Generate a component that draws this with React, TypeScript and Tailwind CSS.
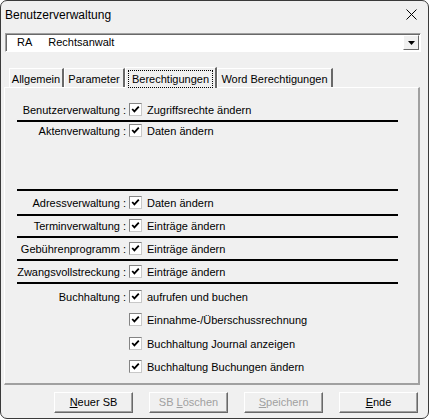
import React from 'react'

const FONT = { fontFamily: '"Liberation Sans", Arial, sans-serif' }

function Check() {
  return (
    <span className="flex h-[13px] w-[13px] shrink-0 items-center justify-center border border-t-[#848484] border-l-[#848484] border-r-[#c8c8c8] border-b-[#c8c8c8] bg-white">
      <svg width="9" height="9" viewBox="0 0 9 9">
        <polyline points="1.2,4 3.4,6.4 7.8,1.6" fill="none" stroke="#000" strokeWidth="1.8" />
      </svg>
    </span>
  )
}

function PermRow({ label, text, className }: { label: string; text: string; className: string }) {
  return (
    <div className={`flex h-[16px] items-center ${className}`}>
      <span className="mt-[2px] w-[121px] shrink-0 whitespace-nowrap text-right">{label}</span>
      <span className="ml-[3px]">
        <Check />
      </span>
      <span className="ml-[5px] mt-[2px] whitespace-nowrap">{text}</span>
    </div>
  )
}

function SubRow({ text, className }: { text: string; className: string }) {
  return (
    <div className={`flex h-[16px] items-center pl-[124px] ${className}`}>
      <Check />
      <span className="ml-[5px] mt-[2px] whitespace-nowrap">{text}</span>
    </div>
  )
}

function Line({ className }: { className: string }) {
  return <div className={`ml-[12px] h-[2px] w-[381px] bg-black ${className}`} />
}

function Button({ children, disabled }: { children: React.ReactNode; disabled?: boolean }) {
  return (
    <div
      className={`flex h-[21px] w-[79px] items-center justify-center border border-t-white border-l-white border-r-[#696969] border-b-[#696969] bg-[#f0f0f0] shadow-[inset_-1px_-1px_0_#a0a0a0] ${
        disabled ? 'text-[#a0a0a0]' : 'text-black'
      }`}
    >
      {children}
    </div>
  )
}

const TABS = [
  { name: 'Allgemein', w: 'w-[55px]' },
  { name: 'Parameter', w: 'w-[61px]' },
  { name: 'Berechtigungen', w: 'w-[92px]', active: true },
  { name: 'Word Berechtigungen', w: 'w-[116px]' },
]

export default function App() {
  return (
    <div className="h-[419px] w-[429px] bg-white text-[11px] text-black" style={FONT}>
      <div className="flex h-full w-full flex-col overflow-hidden rounded-[7px] border border-[#3a3a3a] bg-[#f0f0f0]">
        {/* Title bar */}
        <div className="flex h-[28px] shrink-0 items-center justify-between pl-[4px] pr-[11px]">
          <span className="text-[12px]">Benutzerverwaltung</span>
          <svg width="11" height="11" viewBox="0 0 11 11" className="-mt-[2px]">
            <path d="M0.5 0.5 L10.5 10.5 M10.5 0.5 L0.5 10.5" stroke="#000" strokeWidth="1" />
          </svg>
        </div>

        {/* Combo */}
        <div className="ml-[4px] mr-[7px] mt-[4px] flex h-[19px] items-center border border-t-[#a0a0a0] border-l-[#a0a0a0] border-r-white border-b-white bg-white shadow-[inset_1px_1px_0_#696969]">
          <span className="ml-[11px]">RA</span>
          <span className="ml-[16px] flex-1">Rechtsanwalt</span>
          <div className="mr-[1px] flex h-[15px] w-[16px] items-center justify-center border border-t-white border-l-white border-r-[#696969] border-b-[#696969] bg-[#f0f0f0]">
            <svg width="7" height="4" viewBox="0 0 7 4">
              <path d="M0 0 H7 L3.5 4 Z" fill="#000" />
            </svg>
          </div>
        </div>

        {/* Tabs */}
        <div className="ml-[8px] mt-[16px] flex h-[19px] items-end">
          {TABS.map((t) => (
            <div
              key={t.name}
              className={`${t.w} relative flex items-center justify-center border-l border-t border-l-white border-t-white border-r-2 border-r-[#696969] ${
                t.active ? 'z-10 -mb-[1px] h-[21px] bg-[#f0f0f0]' : 'h-[19px]'
              }`}
            >
              {t.active ? (
                <span className="mt-[1px] border border-dotted border-black px-[3px] leading-[16px]">{t.name}</span>
              ) : (
                <span className="mt-[1px] leading-[16px]">{t.name}</span>
              )}
            </div>
          ))}
        </div>

        {/* Panel */}
        <div className="ml-[3px] h-[298px] w-[416px] border-l border-t border-l-white border-t-white border-r-2 border-b-2 border-r-[#a0a0a0] border-b-[#a0a0a0]">
          <PermRow className="mt-[13px]" label="Benutzerverwaltung :" text="Zugriffsrechte ändern" />
          <Line className="mt-[3px]" />
          <PermRow className="mt-0" label="Aktenverwaltung :" text="Daten ändern" />
          <Line className="mt-[51px]" />
          <PermRow className="mt-[3px]" label="Adressverwaltung :" text="Daten ändern" />
          <Line className="mt-[4px]" />
          <PermRow className="mt-[1px]" label="Terminverwaltung :" text="Einträge ändern" />
          <Line className="mt-[3px]" />
          <PermRow className="mt-[2px]" label="Gebührenprogramm :" text="Einträge ändern" />
          <Line className="mt-[3px]" />
          <PermRow className="mt-[2px]" label="Zwangsvollstreckung :" text="Einträge ändern" />
          <Line className="mt-[3px]" />
          <PermRow className="mt-[4px]" label="Buchhaltung :" text="aufrufen und buchen" />
          <SubRow className="mt-[7px]" text="Einnahme-/Überschussrechnung" />
          <SubRow className="mt-[8px]" text="Buchhaltung Journal anzeigen" />
          <SubRow className="mt-[7px]" text="Buchhaltung Buchungen ändern" />
        </div>

        {/* Buttons */}
        <div className="ml-[53px] mt-[7px] flex gap-[16px]">
          <Button>
            <span>
              <span className="underline">N</span>euer SB
            </span>
          </Button>
          <Button disabled>
            <span>
              SB <span className="underline">L</span>öschen
            </span>
          </Button>
          <Button disabled>
            <span>
              <span className="underline">S</span>peichern
            </span>
          </Button>
          <Button>
            <span>
              <span className="underline">E</span>nde
            </span>
          </Button>
        </div>
      </div>
    </div>
  )
}
